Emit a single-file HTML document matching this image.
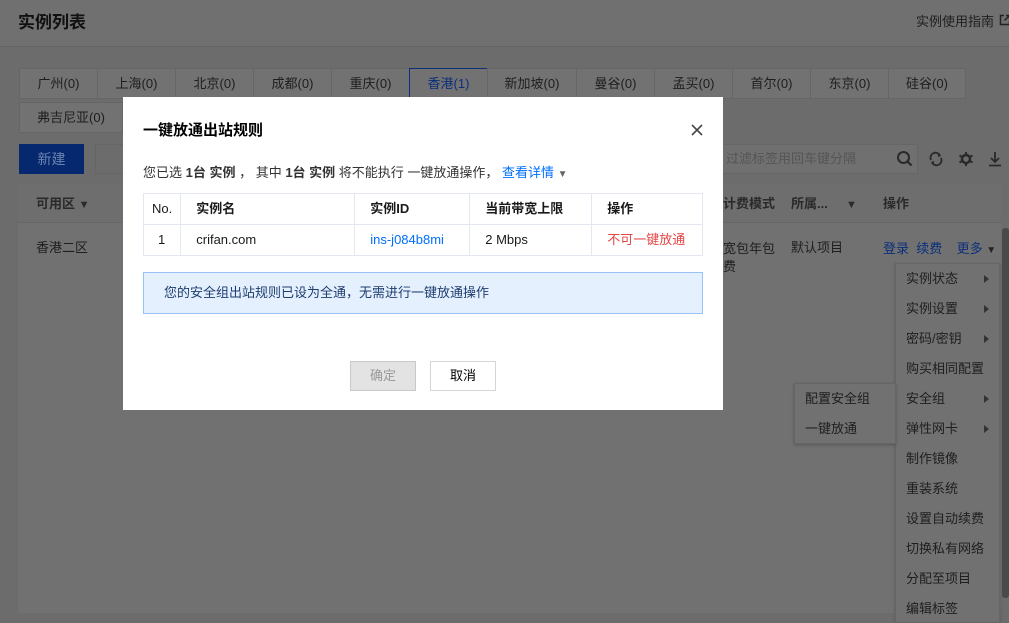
<!DOCTYPE html>
<html><head><meta charset="utf-8"><style>
*{box-sizing:border-box;margin:0;padding:0}
body{width:1009px;height:613px;overflow:hidden;background:#6c6c6c;font-family:"Liberation Sans","Noto Sans CJK SC",sans-serif;font-size:13px;line-height:16px;color:#1a1a1a;position:relative}
.a{position:absolute}
.hdr{left:0;top:0;width:1009px;height:47px;background:#707070;border-bottom:1px solid #646464}
.tab{position:absolute;height:31px;border:1px solid #666;background:#727272;color:#1e1e1e;text-align:center;line-height:29px;font-size:13px}
.mi{position:absolute;left:10px;font-size:13px;color:#1e1e1e}
.arr{position:absolute;right:10px;width:0;height:0;border-left:5px solid #333;border-top:4px solid transparent;border-bottom:4px solid transparent}
td,th{border:1px solid #e3e8f0;text-align:left;font-size:13px;height:31px;padding:0 15px}
th{font-weight:bold}
</style></head><body>
<div class="a hdr"></div>
<div class="a" style="left:18px;top:13px;font-size:17px;line-height:20px;font-weight:bold;color:#111">实例列表</div>
<div class="a" style="left:916px;top:14px;color:#1e1e1e">实例使用指南</div>
<svg class="a" style="left:999px;top:14px" width="12" height="12"><path d="M5 1.5H1.5V10.5H10.5V7" fill="none" stroke="#222" stroke-width="1.5"/><path d="M7 1.5H10.5V5M10.5 1.5L5.5 6.5" fill="none" stroke="#222" stroke-width="1.5"/></svg>

<div class="tab" style="left:19px;top:68px;width:79px">广州(0)</div>
<div class="tab" style="left:97px;top:68px;width:79px">上海(0)</div>
<div class="tab" style="left:175px;top:68px;width:79px">北京(0)</div>
<div class="tab" style="left:253px;top:68px;width:79px">成都(0)</div>
<div class="tab" style="left:331px;top:68px;width:79px">重庆(0)</div>
<div class="tab" style="left:409px;top:68px;width:79px;border-color:#0c2f7a;color:#0c2f7a">香港(1)</div>
<div class="tab" style="left:487px;top:68px;width:90px">新加坡(0)</div>
<div class="tab" style="left:576px;top:68px;width:79px">曼谷(0)</div>
<div class="tab" style="left:654px;top:68px;width:79px">孟买(0)</div>
<div class="tab" style="left:732px;top:68px;width:79px">首尔(0)</div>
<div class="tab" style="left:810px;top:68px;width:79px">东京(0)</div>
<div class="tab" style="left:888px;top:68px;width:78px">硅谷(0)</div>
<div class="tab" style="left:19px;top:102px;width:104px">弗吉尼亚(0)</div>

<div class="a" style="left:19px;top:144px;width:65px;height:30px;background:#05286f;color:#6d83b0;text-align:center;line-height:30px;font-size:14px">新建</div>
<div class="a" style="left:95px;top:144px;width:40px;height:30px;border:1px solid #666"></div>
<div class="a" style="left:700px;top:144px;width:218px;height:30px;border:1px solid #666;background:#707070"></div>
<div class="a" style="left:726px;top:151px;color:#555">过滤标签用回车键分隔</div>
<svg class="a" style="left:896px;top:150px" width="18" height="18"><circle cx="7.5" cy="7.5" r="5.5" fill="none" stroke="#2a2a2a" stroke-width="2"/><path d="M11.5 11.5L15.5 15.5" stroke="#2a2a2a" stroke-width="2.2"/></svg>
<svg class="a" style="left:928px;top:151px" width="16" height="16"><path d="M3 9A5 5 0 0 1 12 4.5M13 7A5 5 0 0 1 4 11.5" fill="none" stroke="#2a2a2a" stroke-width="1.8"/><path d="M10 2L13 5L10 6ZM6 14L3 11L6 10Z" fill="#2a2a2a"/></svg>
<svg class="a" style="left:958px;top:151px" width="16" height="16"><circle cx="8" cy="8" r="4" fill="none" stroke="#2a2a2a" stroke-width="2.5"/><path d="M8 1V4M8 12V15M1.5 4.5L4 6M12 10L14.5 11.5M1.5 11.5L4 10M12 6L14.5 4.5" stroke="#2a2a2a" stroke-width="2"/></svg>
<svg class="a" style="left:988px;top:151px" width="14" height="16"><path d="M7 1V11M3 7L7 11L11 7M1 14.5H13" fill="none" stroke="#2a2a2a" stroke-width="1.8"/></svg>

<div class="a" style="left:18px;top:184px;width:983px;height:429px;background:#717171"></div>
<div class="a" style="left:18px;top:184px;width:983px;height:39px;background:#6e6e6e;border-bottom:1px solid #666"></div>
<div class="a" style="left:36px;top:196px;color:#2a2a2a;font-weight:bold">可用区 <span style="font-size:11px">▼</span></div>
<div class="a" style="left:36px;top:240px;color:#1e1e1e">香港二区</div>
<div class="a" style="left:723px;top:196px;color:#2a2a2a;font-weight:bold">计费模式</div>
<div class="a" style="left:791px;top:196px;color:#2a2a2a;font-weight:bold">所属...</div>
<div class="a" style="left:846px;top:197px;color:#2a2a2a;font-size:11px">▼</div>
<div class="a" style="left:883px;top:196px;color:#2a2a2a;font-weight:bold">操作</div>
<div class="a" style="left:723px;top:240px;color:#1e1e1e;line-height:18px">宽包年包<br>费</div>
<div class="a" style="left:791px;top:240px;color:#1e1e1e">默认项目</div>
<div class="a" style="left:883px;top:241px;color:#0c2f7a">登录 &nbsp;续费 &nbsp;&nbsp;&nbsp;更多 <span style="color:#222;font-size:10px">▼</span></div>
<div class="a" style="left:1002px;top:228px;width:7px;height:370px;background:#4a4a4a;border-radius:3px"></div>

<div class="a" style="left:895px;top:263px;width:105px;height:360px;background:#717171;border:1px solid #666;box-shadow:0 1px 3px rgba(0,0,0,.2)">
<div class="mi" style="top:7px">实例状态</div><div class="arr" style="top:11px"></div>
<div class="mi" style="top:37px">实例设置</div><div class="arr" style="top:41px"></div>
<div class="mi" style="top:67px">密码/密钥</div><div class="arr" style="top:71px"></div>
<div class="mi" style="top:97px">购买相同配置</div>
<div class="mi" style="top:127px">安全组</div><div class="arr" style="top:131px"></div>
<div class="mi" style="top:157px">弹性网卡</div><div class="arr" style="top:161px"></div>
<div class="mi" style="top:187px">制作镜像</div>
<div class="mi" style="top:217px">重装系统</div>
<div class="mi" style="top:247px">设置自动续费</div>
<div class="mi" style="top:277px">切换私有网络</div>
<div class="mi" style="top:307px">分配至项目</div>
<div class="mi" style="top:337px">编辑标签</div>
</div>
<div class="a" style="left:794px;top:383px;width:102px;height:61px;background:#717171;border:1px solid #666;box-shadow:0 1px 3px rgba(0,0,0,.25)">
<div class="mi" style="top:7px">配置安全组</div>
<div class="mi" style="top:37px">一键放通</div>
</div>

<div class="a" style="left:123px;top:97px;width:600px;height:313px;background:#fff">
<div class="a" style="left:20px;top:25px;font-size:15px;line-height:18px;font-weight:bold;color:#000">一键放通出站规则</div>
<svg class="a" style="left:568px;top:27px" width="12" height="12"><path d="M1 1L11 11M11 1L1 11" stroke="#444" stroke-width="1.6"/></svg>
<div class="a" style="left:20px;top:68px;color:#333">您已选 <b>1台 实例</b> ， 其中 <b>1台 实例</b> 将不能执行 一键放通操作， <span style="color:#006eff">查看详情</span> <span style="color:#666;font-size:10px">▼</span></div>
<table class="a" style="left:20px;top:96px;width:560px;border-collapse:collapse;border:1px solid #e3e8f0">
<tr><th style="width:37px;padding:0 8px;font-weight:normal">No.</th><th style="width:174px">实例名</th><th style="width:115px">实例ID</th><th style="width:122px">当前带宽上限</th><th>操作</th></tr>
<tr><td style="padding:0 14px">1</td><td>crifan.com</td><td style="color:#006eff">ins-j084b8mi</td><td>2 Mbps</td><td style="color:#e54545">不可一键放通</td></tr>
</table>
<div class="a" style="left:20px;top:175px;width:560px;height:42px;background:#e5f0ff;border:1px solid #97c2fa;line-height:40px;padding-left:20px;color:#1d3d6e">您的安全组出站规则已设为全通，无需进行一键放通操作</div>
<div class="a" style="left:227px;top:264px;width:66px;height:30px;background:#e3e3e3;border:1px solid #c8c8c8;text-align:center;line-height:28px;color:#999">确定</div>
<div class="a" style="left:307px;top:264px;width:66px;height:30px;background:#fff;border:1px solid #d5d5d5;text-align:center;line-height:28px;color:#000">取消</div>
</div>
</body></html>
